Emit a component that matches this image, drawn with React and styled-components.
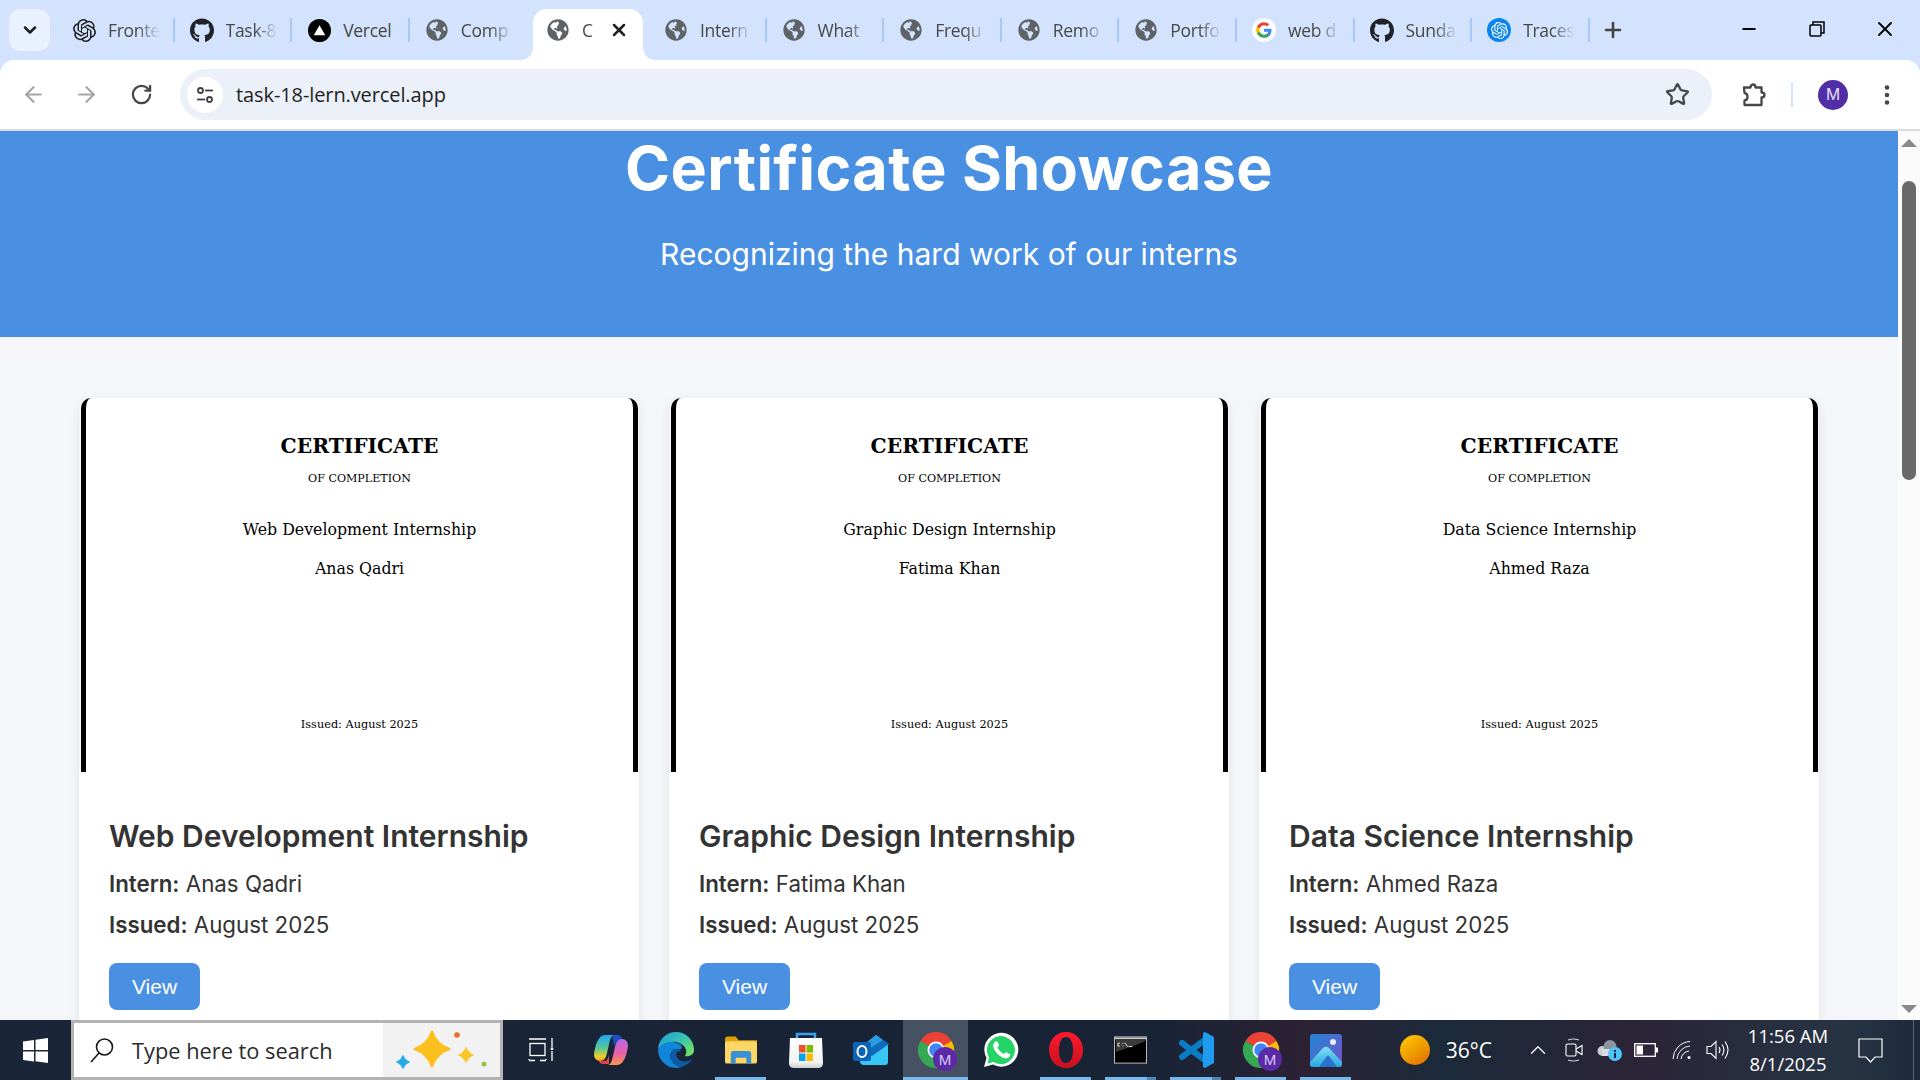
import styled, { createGlobalStyle } from "styled-components"
import { ArrowLeft, ArrowRight, RotateCw, Star, X, Plus, Minus, ChevronDown, ChevronUp } from "lucide-react"
import { FaGithub, FaGlobeAmericas } from "react-icons/fa"
import { SiOpenai } from "react-icons/si"

const GlobalStyle = createGlobalStyle`
  html, body { margin: 0; padding: 0; height: 100%; overflow: hidden; }
  body { font-family: "Open Sans", "Liberation Sans", sans-serif; }
  * { box-sizing: border-box; }
`

// ---- tab favicons
function VercelIcon() {
  return (
    <svg width="23" height="23" viewBox="0 0 24 24">
      <circle cx="12" cy="12" r="12" fill="#000" />
      <path d="M12 6.5 L18 17 H6 Z" fill="#fff" />
    </svg>
  )
}

function GoogleIcon() {
  return (
    <svg width="24" height="24" viewBox="0 0 24 24">
      <circle cx="12" cy="12" r="12" fill="#fff" />
      <g transform="translate(4.2 4.2) scale(0.65)">
        <path fill="#4285F4" d="M23.5 12.3c0-.8-.1-1.600-.2-2.300H12v4.500h6.500c-.3 1.500-1.100 2.700-2.400 3.600v3h3.900c2.300-2.100 3.500-5.200 3.500-8.800z" />
        <path fill="#34A853" d="M12 24c3.200 0 6-1.100 8-2.900l-3.900-3c-1.100.7-2.500 1.200-4.100 1.200-3.100 0-5.800-2.100-6.700-5H1.200v3.100C3.200 21.300 7.300 24 12 24z" />
        <path fill="#FBBC05" d="M5.300 14.300c-.5-1.500-.5-3.100 0-4.600V6.600H1.200c-1.700 3.400-1.700 7.400 0 10.800l4.100-3.100z" />
        <path fill="#EA4335" d="M12 4.800c1.800 0 3.400.6 4.600 1.800l3.400-3.400C18 1.200 15.200 0 12 0 7.300 0 3.200 2.700 1.200 6.600l4.100 3.100c.9-2.900 3.600-4.900 6.700-4.900z" />
      </g>
    </svg>
  )
}

function TracesIcon() {
  return (
    <IconDisc>
      <SiOpenai size={17} color="#fff" />
    </IconDisc>
  )
}

const IconDisc = styled.span`
  width: 24px;
  height: 24px;
  border-radius: 50%;
  background: #0a84ee;
  display: flex;
  align-items: center;
  justify-content: center;
`

const globe = <FaGlobeAmericas size={22} color="#5f6368" />
const hub = <FaGithub size={25} color="#1f2328" />

// labels are cut to what fits in a tab, like the browser does it
const tabs = [
  { label: "Fronte", icon: <SiOpenai size={23} color="#1f1f1f" /> },
  { label: "Task-8", icon: hub },
  { label: "Vercel", icon: <VercelIcon />, whole: true },
  { label: "Comp", icon: globe },
  { label: "C", icon: globe, active: true },
  { label: "Intern", icon: globe },
  { label: "What", icon: globe },
  { label: "Frequ", icon: globe },
  { label: "Remo", icon: globe },
  { label: "Portfo", icon: globe },
  { label: "web d", icon: <GoogleIcon /> },
  { label: "Sunda", icon: hub },
  { label: "Traces", icon: <TracesIcon /> },
]

// ---- toolbar icons
function SiteSettingsIcon() {
  return (
    <svg width="20" height="20" viewBox="0 0 20 20" fill="none" stroke="#3c4043" strokeWidth="1.8">
      <circle cx="5.500" cy="5.500" r="2.500" />
      <path d="M10 5.500 H18" />
      <circle cx="14.500" cy="14.500" r="2.500" />
      <path d="M2 14.500 H10" />
    </svg>
  )
}

function PuzzleIcon() {
  return (
    <svg width="26" height="26" viewBox="0 0 26 26" fill="none" stroke="#474747" strokeWidth="2.300" strokeLinejoin="round">
      <path d="M3 5.500 H9.500 C9.500 1.500 14.500 1.500 14.500 5.500 H20.500 V10.500 C24.500 10.500 24.500 15.500 20.500 15.500 V23 H3.500 V18.500 C7.500 18 7.500 11.500 3.500 11 Z" />
    </svg>
  )
}

function RestoreIcon() {
  return (
    <svg width="16" height="16" viewBox="0 0 16 16" fill="none" stroke="#000" strokeWidth="1.500">
      <rect x="1" y="4" width="11" height="11" rx="1" />
      <path d="M4 4 V1 H15 V12 H12" />
    </svg>
  )
}

function MenuDots() {
  return (
    <svg width="6" height="22" viewBox="0 0 6 22" fill="#474747">
      <circle cx="3" cy="3.500" r="2.300" />
      <circle cx="3" cy="11" r="2.300" />
      <circle cx="3" cy="18.500" r="2.300" />
    </svg>
  )
}

// ---- taskbar icons
function WindowsIcon() {
  return (
    <svg width="25" height="25" viewBox="0 0 25 25" fill="#fff">
      <path d="M0 3.500 L11 2 V12 H0 Z" />
      <path d="M12.500 1.800 L25 0 V12 H12.500 Z" />
      <path d="M0 13.500 H11 V23.500 L0 22 Z" />
      <path d="M12.500 13.500 H25 V25 L12.500 23.300 Z" />
    </svg>
  )
}

function MagnifierIcon() {
  return (
    <svg width="26" height="26" viewBox="0 0 26 26" fill="none" stroke="#1a1a1a" strokeWidth="1.600">
      <circle cx="15.500" cy="10" r="8" />
      <path d="M10 16 L2 25" />
    </svg>
  )
}

function star4(cx, cy, r) {
  const k = r * 0.26
  return `M${cx} ${cy - r} Q${cx + k} ${cy - k} ${cx + r} ${cy} Q${cx + k} ${cy + k} ${cx} ${cy + r} Q${cx - k} ${cy + k} ${cx - r} ${cy} Q${cx - k} ${cy - k} ${cx} ${cy - r}Z`
}

function SparkleArt() {
  return (
    <svg width="96" height="48" viewBox="0 0 96 48">
      <path d={star4(38, 23, 18)} fill="#fcbf1e" stroke="#fcbf1e" strokeWidth="1.500" strokeLinejoin="round" />
      <path d={star4(72, 29, 8.500)} fill="#fbc52b" />
      <path d={star4(9, 36, 6.500)} fill="#27a9e8" stroke="#27a9e8" strokeLinejoin="round" />
      <circle cx="63" cy="9" r="2.800" fill="#ee6a32" />
      <circle cx="90" cy="38" r="2.500" fill="#8cc63f" />
    </svg>
  )
}

function TaskViewIcon() {
  return (
    <svg width="26" height="26" viewBox="0 0 26 26" fill="none" stroke="#fff" strokeWidth="1.300">
      <rect x="2" y="6.500" width="15" height="12" />
      <path d="M1 2 H18 M1 23 V22 M18 23 V22 M1 23.500 H7 M12 23.500 H18 M24 1 V10 M24 14 V24" />
      <rect x="22.800" y="10.500" width="2.400" height="2.400" fill="#fff" stroke="none" />
    </svg>
  )
}

function CopilotIcon() {
  return (
    <svg width="34" height="32" viewBox="0 0 34 32">
      <defs>
        <linearGradient id="cpA" x1="0" y1="0" x2="0" y2="1">
          <stop offset="0" stopColor="#20a4f3" />
          <stop offset=".5" stopColor="#55c99a" />
          <stop offset=".85" stopColor="#f6d01c" />
          <stop offset="1" stopColor="#ef8f4a" />
        </linearGradient>
        <linearGradient id="cpB" x1="0" y1="0" x2="0" y2="1">
          <stop offset="0" stopColor="#b36ce8" />
          <stop offset=".55" stopColor="#ea5fa8" />
          <stop offset="1" stopColor="#fb9a4a" />
        </linearGradient>
      </defs>
      <path d="M18 1 H23 C27 1 28 4 29 8 L24 8 C22 8 21 10 20 12 Z" fill="#1d4fc4" />
      <path d="M9 30 C7 30 5.500 29 5 27 H11 C13 27 14 24 15 21 L15 30 Z" fill="#e8404a" />
      <path d="M11 1 H21 C18 1 17 3 16 6 L13 19 C12 24 10 27 6 27 C2 27 0 24 0 20 C1 12 4 1 11 1Z" fill="url(#cpA)" />
      <path d="M23 31 H13 C16 31 17 29 18 26 L21 13 C22 8 24 5 28 5 C32 5 34 8 34 12 C33 20 30 31 23 31Z" fill="url(#cpB)" />
    </svg>
  )
}

function EdgeIcon() {
  return (
    <svg width="36" height="36" viewBox="0 0 36 36">
      <defs>
        <linearGradient id="edA" x1="0" y1="0" x2="1" y2=".7">
          <stop offset="0" stopColor="#1e9bd8" />
          <stop offset=".6" stopColor="#37c4b4" />
          <stop offset="1" stopColor="#6ee06a" />
        </linearGradient>
      </defs>
      <path d="M18 0 A18 18 0 0 1 36 18 C36 23 31 25 27 24 C30 20 28 12 18 10 C10 9 3 13 0 18 A18 18 0 0 1 18 0Z" fill="url(#edA)" />
      <path d="M0 18 C3 10 14 8 21 12 C25 14 25 18 21 17 C14 16 11 22 13 27 C15 33 22 36 26 34 A18 18 0 0 1 0 18Z" fill="#1186d8" />
      <path d="M13 27 C11 22 14 16 21 17 C22 17 23 18 23 19 L19 20 C17 24 20 28 24 29 C28 30 32 29 35 26 A18 18 0 0 1 26 34 C22 36 15 33 13 27Z" fill="#0d5aa6" />
    </svg>
  )
}

function FilesIcon() {
  return (
    <svg width="32" height="28" viewBox="0 0 33 28">
      <path d="M0 3 Q0 0 3 0 H11 L14 4 H33 V14 H0 Z" fill="#e0a008" />
      <rect x="0" y="5" width="33" height="23" rx="2" fill="#fcd667" />
      <path d="M6 28 V18 Q6 15 9 15 H24 Q27 15 27 18 V28 H22 V22 H11 V28 Z" fill="#3b8fd4" />
    </svg>
  )
}

function StoreIcon() {
  return (
    <svg width="36" height="36" viewBox="0 0 36 36">
      <defs>
        <linearGradient id="stA" x1="0" y1="0" x2="0" y2="1">
          <stop offset="0" stopColor="#fff" />
          <stop offset=".8" stopColor="#f4f4f4" />
          <stop offset="1" stopColor="#cfcfcf" />
        </linearGradient>
      </defs>
      <path d="M9 8 V2 H27 V8" fill="none" stroke="#35a4e8" strokeWidth="2.500" />
      <path d="M2 6 H34 L35 31 Q35 36 30 36 H6 Q1 36 1 31 Z" fill="url(#stA)" />
      <rect x="11" y="13" width="6.500" height="7.500" fill="#f25022" />
      <rect x="18.500" y="13" width="6.500" height="7.500" fill="#7fba00" />
      <rect x="11" y="21.500" width="6.500" height="7.500" fill="#00a4ef" />
      <rect x="18.500" y="21.500" width="6.500" height="7.500" fill="#ffb900" />
    </svg>
  )
}

function OutlookIcon() {
  return (
    <svg width="36" height="31" viewBox="0 0 36 31">
      <path d="M23 0 L35 9 V27 Q35 30 32 30 H11 Q7 30 7 26 V14 Z" fill="#38c6f4" />
      <path d="M36 9 L19 21 L7 14 L23 0 Z" fill="#0f6cbd" />
      <path d="M10 10 L23 0 L30 5 L16 14 Z" fill="#2a9be0" />
      <rect x="0" y="7" width="18" height="19" rx="2" fill="#0a64b8" />
      <ellipse cx="9" cy="16.500" rx="4.500" ry="5.500" fill="none" stroke="#fff" strokeWidth="2" />
    </svg>
  )
}

function ChromeIcon() {
  return (
    <svg width="48" height="48" viewBox="0 0 48 48">
      <path d="M24 24 L8.400 15 A18 18 0 0 1 39.600 15 Z" fill="#ea4335" />
      <path d="M24 24 L39.600 15 A18 18 0 0 1 24 42 Z" fill="#fbbc04" />
      <path d="M24 24 L24 42 A18 18 0 0 1 8.400 15 Z" fill="#34a853" />
      <circle cx="24" cy="24" r="8.500" fill="#fff" />
      <circle cx="24" cy="24" r="6.800" fill="#4285f4" />
      <circle cx="33" cy="33" r="12" fill="#5b2aa8" />
      <text x="33" y="38.500" textAnchor="middle" fontSize="15" fontFamily="Liberation Sans, sans-serif" fill="#d9c8f5">M</text>
    </svg>
  )
}

function WhatsappIcon() {
  return (
    <svg width="36" height="36" viewBox="0 0 36 36">
      <path d="M1 35 L3.500 26 A17 17 0 1 1 10 32.500 Z" fill="#fff" />
      <path d="M4.500 31.500 L6 25.500 A14 14 0 1 1 10.500 30 Z" fill="#25d366" />
      <path d="M12.500 9.500 C10 11 9.500 14 11.500 18 C14 22.500 18 25.500 22.500 26.500 C25 26.500 27 25 27.500 22.500 L23 20 L21 22 C18.500 21 15.500 18 14.500 15.500 L16 13.500 L14.500 9.500 Z" fill="#fff" />
    </svg>
  )
}

function OperaIcon() {
  return (
    <svg width="34" height="36" viewBox="0 0 34 36">
      <defs>
        <linearGradient id="opA" x1="0" y1="0" x2="0" y2="1">
          <stop offset="0" stopColor="#ff1b2d" />
          <stop offset="1" stopColor="#c8101f" />
        </linearGradient>
      </defs>
      <path fillRule="evenodd" d="M17 0 C27 0 34 8 34 18 C34 28 27 36 17 36 C7 36 0 28 0 18 C0 8 7 0 17 0Z M17 5 C12 5 10 11 10 18 C10 25 12 31 17 31 C22 31 24 25 24 18 C24 11 22 5 17 5Z" fill="url(#opA)" />
    </svg>
  )
}

function CmdIcon() {
  return (
    <svg width="33" height="28" viewBox="0 0 34 28">
      <rect x=".5" y=".5" width="33" height="27" fill="#000" stroke="#c0c0c0" />
      <rect x="1" y="1" width="32" height="2" fill="#c8c8c8" />
      <path d="M2 3 H32 V5 Q20 10 2 16 Z" fill="#3a3a3a" />
      <path d="M4 7 H6 M4 7 V10 H6 M9 7 V8 M9 9.500 V10 M11 6.500 L14 10.500 M15 10.500 H19" stroke="#e6e6e6" strokeWidth="1" fill="none" />
    </svg>
  )
}

function VsCodeIcon() {
  return (
    <svg width="36" height="36" viewBox="0 0 36 36">
      <path d="M4 11 L28 29 M4 25 L28 7" stroke="#0a7cc4" strokeWidth="6" strokeLinecap="round" fill="none" />
      <path d="M25 1 L27 0 L36 5 V31 L27 36 L25 35 Z" fill="#1f9cf0" />
    </svg>
  )
}

function PhotosIcon() {
  return (
    <svg width="32" height="33" viewBox="0 0 32 33">
      <defs>
        <linearGradient id="phA" x1="0" y1="0" x2="1" y2="1">
          <stop offset="0" stopColor="#1f87d8" />
          <stop offset="1" stopColor="#7a4fc4" />
        </linearGradient>
        <linearGradient id="phB" x1="0" y1="0" x2="0" y2="1">
          <stop offset="0" stopColor="#7fe0f6" />
          <stop offset="1" stopColor="#28a8e0" />
        </linearGradient>
      </defs>
      <rect width="32" height="33" rx="3" fill="url(#phA)" />
      <circle cx="23" cy="8" r="3" fill="#e6eefc" />
      <path d="M0 28 L13 14 Q16 11 19 14 L32 28 V30 Q32 33 29 33 H3 Q0 33 0 30 Z" fill="url(#phB)" />
      <path d="M9 33 L17 22 Q18 21 19 22 L27 33 Z" fill="#2a74d0" />
    </svg>
  )
}

const apps = [
  { id: "copilot", icon: <CopilotIcon /> },
  { id: "edge", icon: <EdgeIcon /> },
  { id: "files", icon: <FilesIcon />, running: true },
  { id: "store", icon: <StoreIcon /> },
  { id: "outlook", icon: <OutlookIcon /> },
  { id: "chrome", icon: <ChromeIcon />, running: true, current: true },
  { id: "whatsapp", icon: <WhatsappIcon /> },
  { id: "opera", icon: <OperaIcon />, running: true },
  { id: "cmd", icon: <CmdIcon />, running: true, stacked: true },
  { id: "vscode", icon: <VsCodeIcon />, running: true, stacked: true },
  { id: "chrome2", icon: <ChromeIcon />, running: true },
  { id: "photos", icon: <PhotosIcon />, running: true },
]

// tray
function MeetIcon() {
  return (
    <svg width="18" height="24" viewBox="0 0 18 24" fill="none" stroke="#fff" strokeWidth="1.100">
      <rect x="1" y="6" width="10" height="12" rx="1.500" />
      <path d="M11 11 L17 7.500 V16.500 L11 13" />
      <path d="M3 2 Q8 0 14 2 M3 22 Q8 24 14 22" opacity=".8" />
    </svg>
  )
}

function CloudInfoIcon() {
  return (
    <svg width="26" height="24" viewBox="0 0 26 24">
      <circle cx="5.500" cy="13" r="5" fill="#c9ced6" />
      <circle cx="13" cy="8.500" r="6.500" fill="#8d949e" />
      <rect x="5" y="11" width="12" height="7" fill="#d8dce2" />
      <circle cx="18" cy="16" r="7" fill="#4fc3f7" />
      <rect x="17" y="15" width="2" height="5" fill="#10253a" />
      <rect x="17" y="12" width="2" height="2" fill="#10253a" />
    </svg>
  )
}

function BatteryIcon() {
  return (
    <svg width="24" height="14" viewBox="0 0 24 14" fill="none">
      <rect x=".7" y=".7" width="20.600" height="12.600" stroke="#fff" strokeWidth="1.300" />
      <rect x="2.500" y="2.500" width="6.500" height="9" fill="#fff" />
      <rect x="22" y="4.500" width="2" height="5" fill="#fff" />
    </svg>
  )
}

function WifiIcon() {
  return (
    <svg width="22" height="20" viewBox="0 0 22 20" fill="none" stroke="#fff" strokeWidth="1">
      <path d="M1 19 A18 18 0 0 1 18 1.500" />
      <path d="M5 19 A14 14 0 0 1 18 6" opacity=".9" />
      <path d="M9 19 A9 9 0 0 1 17 11" />
      <circle cx="17" cy="17.500" r="1.500" fill="#fff" stroke="none" />
    </svg>
  )
}

function VolumeIcon() {
  return (
    <svg width="23" height="20" viewBox="0 0 23 20" fill="none" stroke="#fff" strokeWidth="1.100">
      <path d="M1 6.500 H5 L10 1.500 V18.500 L5 13.500 H1 Z" />
      <path d="M13 7 Q15 10 13 13" />
      <path d="M16 4.500 Q20 10 16 15.500" />
      <path d="M19 1.500 Q25 10 19 18.500" />
    </svg>
  )
}

function NotificationIcon() {
  return (
    <svg width="25" height="25" viewBox="0 0 25 25" fill="none" stroke="#fff" strokeWidth="1.200">
      <path d="M1 1 H24 V19 H17 L12.500 24 L8 19 H1 Z" />
    </svg>
  )
}

const certificates = [
  { course: "Web Development Internship", intern: "Anas Qadri" },
  { course: "Graphic Design Internship", intern: "Fatima Khan" },
  { course: "Data Science Internship", intern: "Ahmed Raza" },
]

export default function App() {
  return (
    <Screen>
      <GlobalStyle />
      <BrowserFrame>
        <TabStrip>
          <TabSearch><ChevronDown size={20} strokeWidth={3} color="#1f1f1f" /></TabSearch>
          {tabs.map((tab, index) => (
            <TabSlot key={index}>
              <Tab $active={tab.active}>
                <TabIcon>{tab.icon}</TabIcon>
                <TabLabel $active={tab.active} $whole={tab.whole}>{tab.label}</TabLabel>
                {tab.active && <TabClose><X size={20} strokeWidth={3} color="#1f1f1f" /></TabClose>}
              </Tab>
              <TabSep $hidden={tab.active || (tabs[index + 1] && tabs[index + 1].active)} />
            </TabSlot>
          ))}
          <NewTab><Plus size={24} strokeWidth={2.6} color="#444" /></NewTab>
          <WindowControls>
            <WindowButton><Minus size={20} strokeWidth={2.2} color="#000" /></WindowButton>
            <WindowButton><RestoreIcon /></WindowButton>
            <WindowButton><X size={24} strokeWidth={1.8} color="#000" /></WindowButton>
          </WindowControls>
        </TabStrip>
        <Toolbar>
          <NavButton><ArrowLeft size={25} strokeWidth={2} color="#a3a5a8" /></NavButton>
          <NavButton $mr="11px"><ArrowRight size={25} strokeWidth={2} color="#a3a5a8" /></NavButton>
          <NavButton><RotateCw size={23} strokeWidth={2.3} color="#474747" /></NavButton>
          <AddressBar>
            <SiteChip><SiteSettingsIcon /></SiteChip>
            <Url>task-18-lern.vercel.app</Url>
            <BookmarkStar><Star size={25} strokeWidth={2.2} color="#474747" /></BookmarkStar>
          </AddressBar>
          <ExtensionButton><PuzzleIcon /></ExtensionButton>
          <ToolbarDivider />
          <ProfileSlot><Avatar>M</Avatar></ProfileSlot>
          <MenuSlot><MenuDots /></MenuSlot>
        </Toolbar>
      </BrowserFrame>

      <Viewport>
        <Page>
          <Hero>
            <HeroTitle>Certificate Showcase</HeroTitle>
            <HeroSub>Recognizing the hard work of our interns</HeroSub>
          </Hero>
          <CardGrid>
            {certificates.map((c) => (
              <Card key={c.course}>
                <CertSheet>
                  <CertTitle>CERTIFICATE</CertTitle>
                  <CertSub>OF COMPLETION</CertSub>
                  <CertCourse>{c.course}</CertCourse>
                  <CertName>{c.intern}</CertName>
                  <CertIssued>Issued: August 2025</CertIssued>
                </CertSheet>
                <CardInfo>
                  <CardTitle>{c.course}</CardTitle>
                  <InfoLine><b>Intern:</b> {c.intern}</InfoLine>
                  <InfoLine $gap="7px"><b>Issued:</b> August 2025</InfoLine>
                  <ViewButton>View</ViewButton>
                </CardInfo>
              </Card>
            ))}
          </CardGrid>
        </Page>
        <ScrollBar>
          <ScrollArrow />
          <ScrollThumb />
          <ScrollArrow $down />
        </ScrollBar>
      </Viewport>

      <Taskbar>
        <StartButton><WindowsIcon /></StartButton>
        <SearchBox>
          <SearchGlass><MagnifierIcon /></SearchGlass>
          <SearchText>Type here to search</SearchText>
          <SearchArt><SparkleArt /></SearchArt>
        </SearchBox>
        <TaskView><TaskViewIcon /></TaskView>
        {apps.map((app) => (
          <AppSlot key={app.id} $current={app.current}>
            {app.icon}
            {app.running && <RunningBar $current={app.current} $stacked={app.stacked} />}
          </AppSlot>
        ))}
        <Tray>
          <SunDisc />
          <Temperature>36°C</Temperature>
          <TrayIcon $w="40px" $ml="26px"><ChevronUp size={26} strokeWidth={1.200} color="#fff" /></TrayIcon>
          <TrayIcon $w="32px"><MeetIcon /></TrayIcon>
          <TrayIcon $w="40px"><CloudInfoIcon /></TrayIcon>
          <TrayIcon $w="32px"><BatteryIcon /></TrayIcon>
          <TrayIcon $w="42px"><WifiIcon /></TrayIcon>
          <TrayIcon $w="26px"><VolumeIcon /></TrayIcon>
          <Clock>
            <span>11:56 AM</span>
            <span>8/1/2025</span>
          </Clock>
          <TrayIcon $w="50px" $ml="7px"><NotificationIcon /></TrayIcon>
          <ShowDesktop />
        </Tray>
      </Taskbar>
    </Screen>
  )
}

const Screen = styled.div`
  width: 1920px;
  height: 1080px;
  display: flex;
  flex-direction: column;
  overflow: hidden;
  background: #fff;
`

const BrowserFrame = styled.div`
  flex: none;
  background: #d3e3fd;
`

const TabStrip = styled.div`
  height: 60px;
  display: flex;
  align-items: flex-end;
  padding-left: 9px;
`

const TabSearch = styled.div`
  width: 41px;
  height: 42px;
  margin: 0 7px 9px 0;
  border-radius: 12px;
  background: #e9f0fe;
  display: flex;
  align-items: center;
  justify-content: center;
`

const TabSlot = styled.div`
  display: flex;
  align-items: flex-end;
  height: 51px;
`

const Tab = styled.div`
  position: relative;
  width: ${(p) => (p.$active ? "110px" : "115.6px")};
  height: 51px;
  margin: ${(p) => (p.$active ? "0 3.6px 0 6px" : "0")};
  padding: 0 0 9px ${(p) => (p.$active ? "12.6px" : "15px")};
  display: flex;
  align-items: center;
  background: ${(p) => (p.$active ? "#fff" : "transparent")};
  border-radius: 14px 14px 0 0;
  color: #474747;

  ${(p) =>
    p.$active &&
    `
    &::before, &::after {
      content: "";
      position: absolute;
      bottom: 0;
      width: 12px;
      height: 12px;
    }
    &::before { left: -12px; background: radial-gradient(circle at 0 0, #d3e3fd 11.500px, #fff 12px); }
    &::after { right: -12px; background: radial-gradient(circle at 100% 0, #d3e3fd 11.500px, #fff 12px); }
  `}
`

const TabIcon = styled.span`
  flex: none;
  width: 24px;
  height: 24px;
  display: flex;
  align-items: center;
  justify-content: center;
`

const TabLabel = styled.span`
  flex: none;
  margin-left: 12px;
  width: ${(p) => (p.$active ? "15px" : "52px")};
  white-space: nowrap;
  font-size: 17.5px;
  line-height: 24px;
  font-family: "Open Sans", sans-serif;
  letter-spacing: -0.3px;
  color: #474747;
  ${(p) =>
    !p.$whole &&
    `
    -webkit-mask-image: linear-gradient(90deg, #000 55%, transparent 100%);
    mask-image: linear-gradient(90deg, #000 55%, transparent 100%);
  `}
`

const TabClose = styled.span`
  margin-left: 12px;
  display: flex;
`

const TabSep = styled.span`
  width: 2px;
  height: 24px;
  margin-bottom: 18px;
  background: ${(p) => (p.$hidden ? "transparent" : "#a8c7fa")};
`

const NewTab = styled.div`
  margin: 0 0 18px 11px;
  display: flex;
`

const WindowControls = styled.div`
  margin-left: auto;
  padding-right: 1px;
  height: 60px;
  display: flex;
`

const WindowButton = styled.div`
  width: 68px;
  height: 58px;
  display: flex;
  align-items: center;
  justify-content: center;
`

const Toolbar = styled.div`
  height: 71px;
  padding: 0 11px;
  display: flex;
  align-items: center;
  background: #fff;
  border-radius: 14px 14px 0 0;
  border-bottom: 2px solid #dcdcdc;
`

const NavButton = styled.div`
  width: 44px;
  height: 44px;
  margin-right: ${(p) => p.$mr || "9px"};
  display: flex;
  align-items: center;
  justify-content: center;
`

const AddressBar = styled.div`
  flex: 1;
  height: 51px;
  margin-left: 8px;
  padding: 0 22px 0 7px;
  border-radius: 26px;
  background: #ebf0f9;
  display: flex;
  align-items: center;
`

const SiteChip = styled.div`
  width: 36px;
  height: 36px;
  border-radius: 50%;
  background: #fff;
  display: flex;
  align-items: center;
  justify-content: center;
`

const Url = styled.div`
  margin-left: 13px;
  font-family: "Open Sans", sans-serif;
  font-size: 20px;
  color: #1f1f1f;
  letter-spacing: -0.1px;
`

const BookmarkStar = styled.div`
  margin-left: auto;
  display: flex;
`

const ExtensionButton = styled.div`
  width: 44px;
  margin-left: 20px;
  display: flex;
  justify-content: center;
`

const ToolbarDivider = styled.div`
  width: 2px;
  height: 24px;
  margin-left: 15px;
  background: #d3e3fd;
`

const ProfileSlot = styled.div`
  width: 44px;
  margin-left: 18px;
  display: flex;
  justify-content: center;
`

const Avatar = styled.div`
  width: 30px;
  height: 30px;
  border-radius: 50%;
  background: #512da8;
  color: #e8e0f8;
  font-family: "Liberation Sans", sans-serif;
  font-size: 17px;
  display: flex;
  align-items: center;
  justify-content: center;
`

const MenuSlot = styled.div`
  width: 44px;
  margin-left: 10px;
  display: flex;
  justify-content: center;
`

const Viewport = styled.div`
  flex: 1;
  min-height: 0;
  display: flex;
`

const Page = styled.main`
  flex: 1;
  min-width: 0;
  overflow: hidden;
  background: #f4f6f9;
  font-family: Inter, "Liberation Sans", sans-serif;
  color: #333;
`

const Hero = styled.header`
  height: 206px;
  background: #4a90e2;
  color: #fff;
  text-align: center;
`

const HeroTitle = styled.h1`
  margin: 0;
  font-size: 61px;
  line-height: 74px;
  font-weight: 700;
  letter-spacing: 0.4px;
`

const HeroSub = styled.p`
  margin: 29px 0 0;
  font-size: 30px;
  line-height: 40px;
  font-weight: 400;
`

const CardGrid = styled.section`
  display: grid;
  grid-template-columns: repeat(3, 1fr);
  gap: 30px;
  padding: 61px 79px 40px;
`

const Card = styled.article`
  border-radius: 12px;
  box-shadow: 0 4px 12px rgba(0, 0, 0, 0.08);
`

const CertSheet = styled.div`
  height: 374px;
  margin: 0 1px 0 2px;
  padding: 36px 0 40px;
  background: #fff;
  border-left: 5px solid #000;
  border-right: 5px solid #000;
  border-radius: 10px 10px 0 0;
  display: flex;
  flex-direction: column;
  align-items: center;
  font-family: "DejaVu Serif", serif;
  color: #000;
`

const CertTitle = styled.div`
  font-size: 20.3px;
  line-height: 24px;
  font-weight: 700;
`

const CertSub = styled.div`
  margin-top: 14px;
  font-size: 11.1px;
  line-height: 14px;
`

const CertCourse = styled.div`
  margin-top: 34px;
  font-size: 15.8px;
  line-height: 20px;
`

const CertName = styled.div`
  margin-top: 19px;
  font-size: 15.8px;
  line-height: 20px;
`

const CertIssued = styled.div`
  margin-top: auto;
  font-size: 11.3px;
  line-height: 14px;
`

const CardInfo = styled.div`
  padding: 44px 30px 30px;
  background: #fff;
`

const CardTitle = styled.h3`
  margin: 0;
  font-size: 30px;
  line-height: 40px;
  font-weight: 600;
`

const InfoLine = styled.p`
  margin: ${(p) => p.$gap || "11px"} 0 0;
  font-size: 22.3px;
  line-height: 34px;
  font-weight: 400;

  b {
    font-weight: 600;
  }
`

const ViewButton = styled.button`
  display: block;
  width: 91px;
  height: 47px;
  margin-top: 21px;
  border: 0;
  border-radius: 8px;
  background: #4a90e2;
  color: #fff;
  font-family: "Liberation Sans", sans-serif;
  font-size: 21px;
`

const ScrollBar = styled.aside`
  flex: none;
  width: 22px;
  background: #fbfbfb;
  display: flex;
  flex-direction: column;
  align-items: center;
`

const ScrollArrow = styled.div`
  width: 0;
  height: 0;
  margin-top: ${(p) => (p.$down ? "auto" : "8px")};
  margin-bottom: ${(p) => (p.$down ? "7px" : "0")};
  border-left: 8px solid transparent;
  border-right: 8px solid transparent;
  border-bottom: ${(p) => (p.$down ? "0" : "8px solid #8a8a8a")};
  border-top: ${(p) => (p.$down ? "8px solid #8a8a8a" : "0")};
`

const ScrollThumb = styled.div`
  width: 14px;
  height: 299px;
  margin-top: 34px;
  border-radius: 7px;
  background: #6a6a6a;
`

const Taskbar = styled.footer`
  flex: none;
  height: 60px;
  display: flex;
  color: #fff;
  font-family: "Open Sans", sans-serif;
  background: linear-gradient(90deg, #1a2537 0%, #182436 60%, #2c2135 68%, #1b2a3a 75%, #2b2437 85%, #263443 96%, #1d2a3b 100%);
`

const StartButton = styled.div`
  width: 71px;
  display: flex;
  align-items: center;
  justify-content: center;
`

const SearchBox = styled.div`
  width: 432px;
  border: 3px solid #b3b3b3;
  background: #fff;
  display: flex;
  align-items: center;
`

const SearchGlass = styled.div`
  margin-left: 15px;
  display: flex;
`

const SearchText = styled.div`
  margin-left: 17px;
  font-size: 21.8px;
  color: #2b2b2b;
  white-space: nowrap;
`

const SearchArt = styled.div`
  margin-left: auto;
  width: 117px;
  height: 100%;
  background: #f2f2f2;
  display: flex;
  align-items: center;
  justify-content: center;
`

const TaskView = styled.div`
  width: 75px;
  display: flex;
  align-items: center;
  justify-content: center;
`

const AppSlot = styled.div`
  position: relative;
  width: 65px;
  display: flex;
  align-items: center;
  justify-content: center;
  background: ${(p) => (p.$current ? "#465162" : "transparent")};
`

const RunningBar = styled.span`
  position: absolute;
  bottom: 0;
  left: ${(p) => (p.$current ? "0" : "7px")};
  right: ${(p) => (p.$current ? "0" : "7px")};
  height: 3px;
  background: ${(p) => (p.$stacked ? "linear-gradient(90deg, #76b9ed 83%, #4f86b4 83%)" : "#76b9ed")};
`

const Tray = styled.div`
  margin-left: auto;
  display: flex;
  align-items: center;
`

const SunDisc = styled.div`
  width: 30px;
  height: 30px;
  border-radius: 50%;
  background: linear-gradient(145deg, #ffd000, #e06a00);
`

const Temperature = styled.div`
  margin-left: 16px;
  font-size: 21px;
`

const TrayIcon = styled.div`
  width: ${(p) => p.$w};
  margin-left: ${(p) => p.$ml || "0"};
  display: flex;
  justify-content: center;
`

const Clock = styled.div`
  width: 100px;
  margin-left: 8px;
  display: flex;
  flex-direction: column;
  align-items: center;
  font-size: 18.5px;
  line-height: 28px;
`

const ShowDesktop = styled.div`
  align-self: stretch;
  width: 7px;
  margin: 0 0 0 18px;
  border-left: 1px solid #5a6470;
`
